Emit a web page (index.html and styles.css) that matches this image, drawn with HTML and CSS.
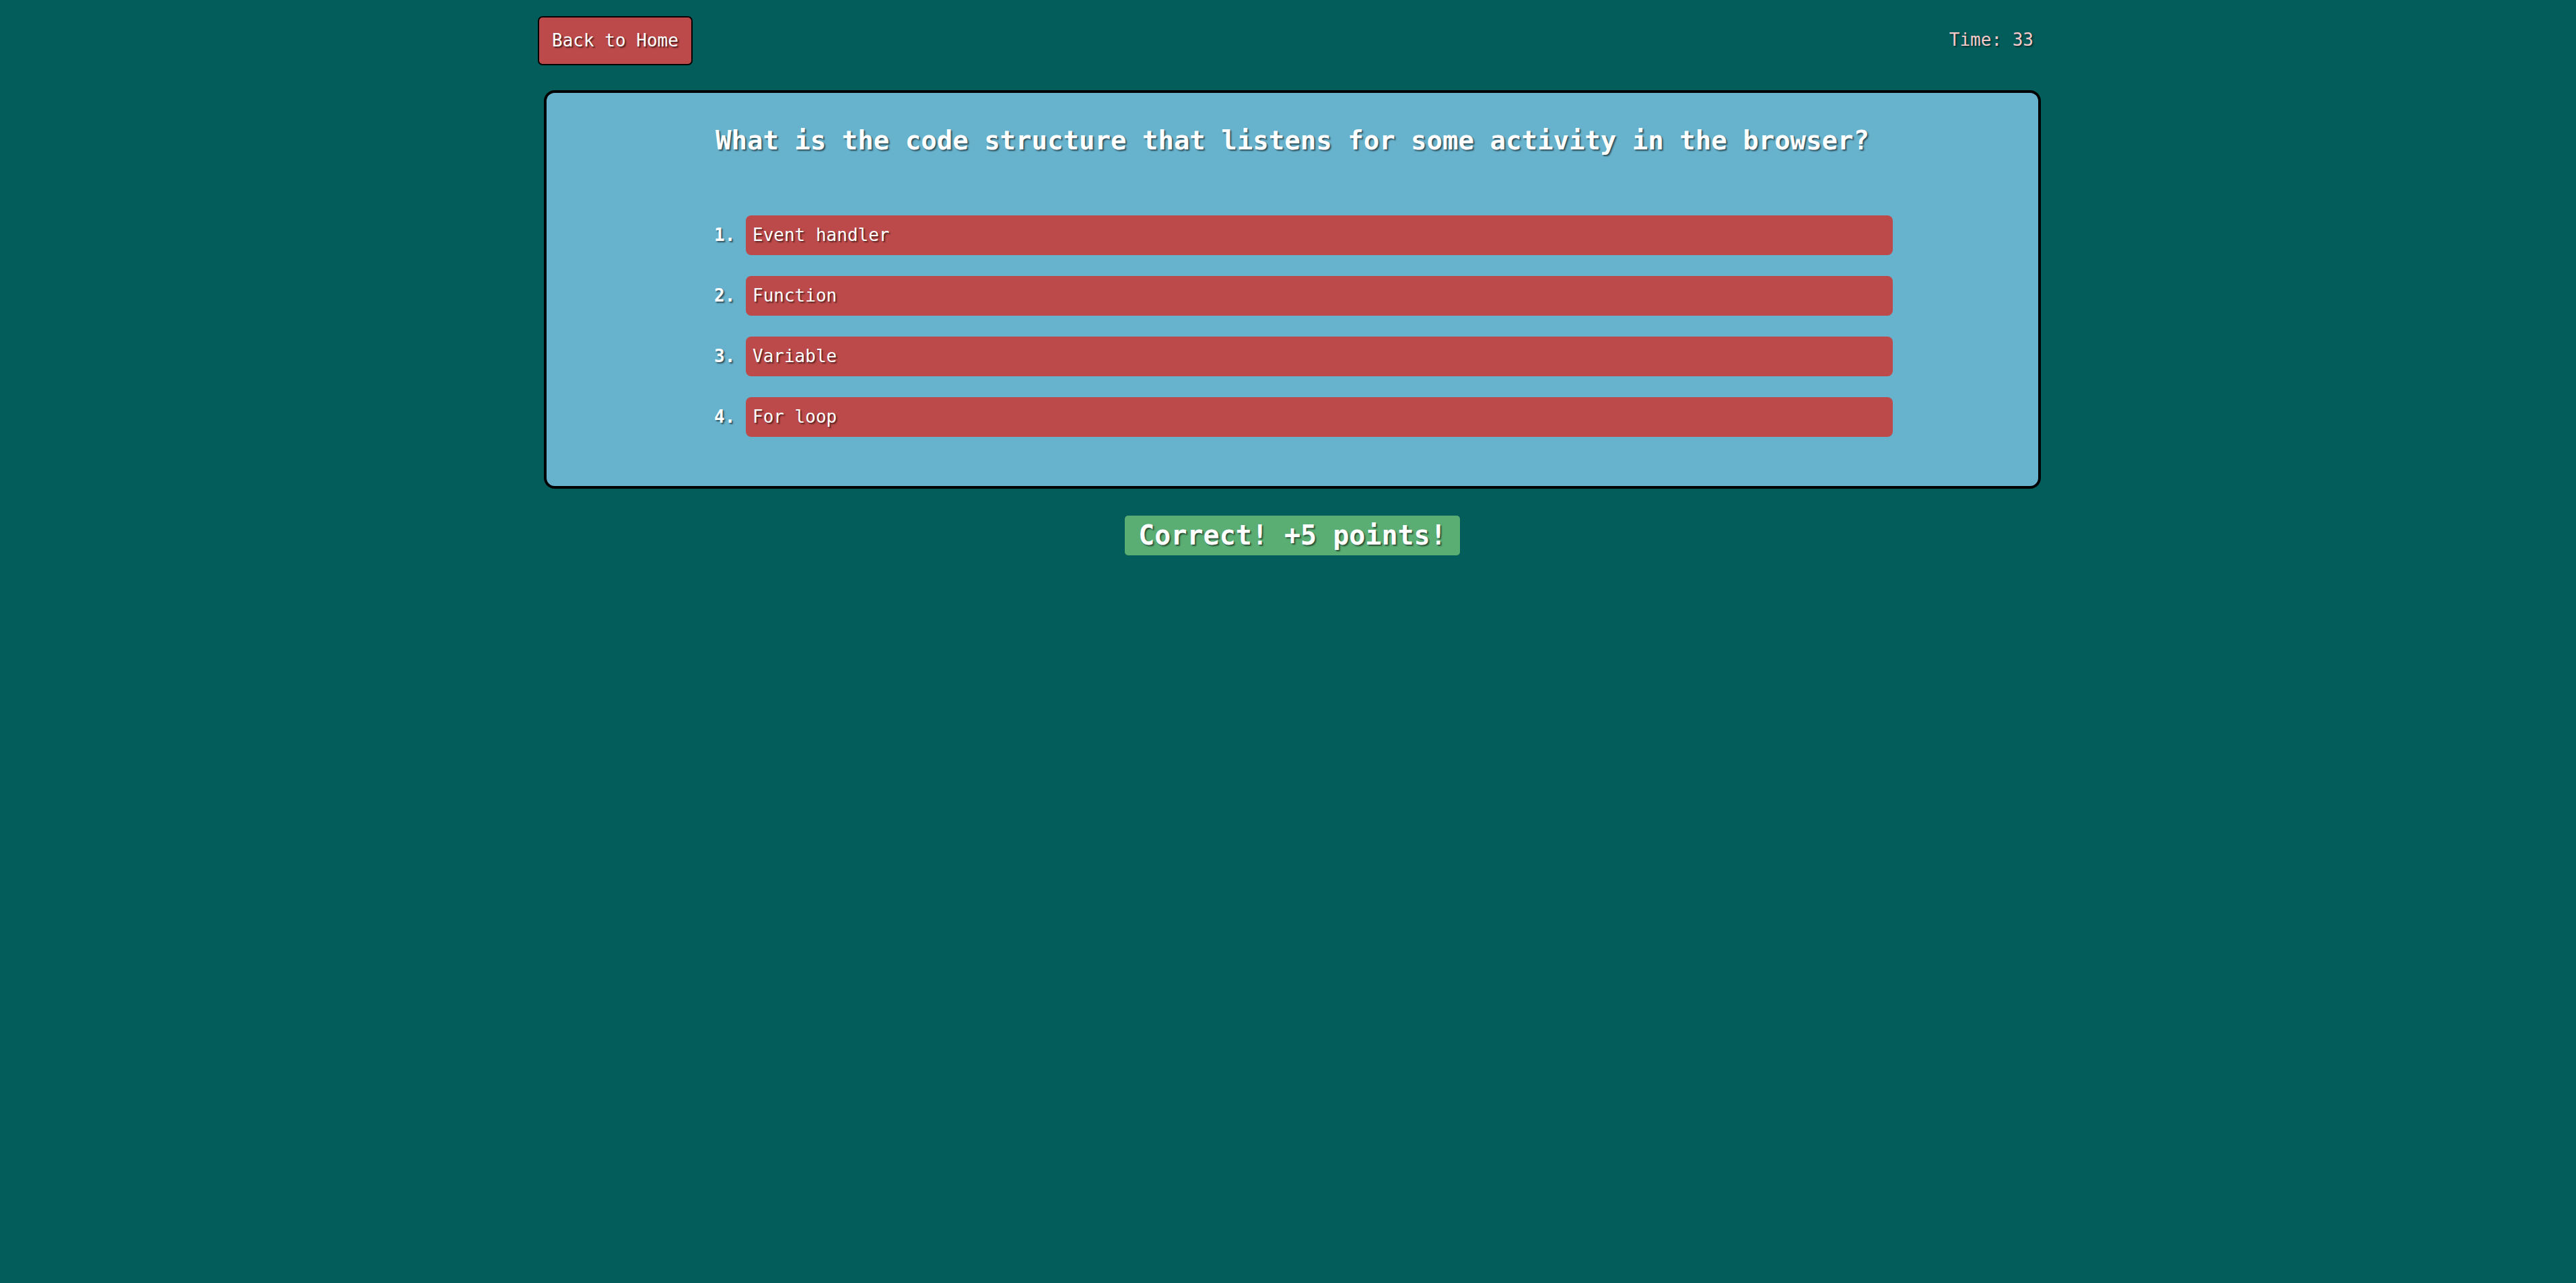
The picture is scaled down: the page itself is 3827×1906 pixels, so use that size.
FILE: index.html
```html
<!DOCTYPE html>
<html lang="en">
<head>
<meta charset="utf-8">
<title>Quiz</title>
<link rel="stylesheet" href="styles.css">
</head>
<body>
<div class="container">
  <header class="top">
    <button class="home-btn">Back to Home</button>
    <span class="timer">Time: 33</span>
  </header>
  <section class="card">
    <h2 class="question">What is the code structure that listens for some activity in the browser?</h2>
    <ol class="choices">
      <li><button class="choice">Event handler</button></li>
      <li><button class="choice">Function</button></li>
      <li><button class="choice">Variable</button></li>
      <li><button class="choice">For loop</button></li>
    </ol>
  </section>
  <div class="feedback-row">
    <span class="feedback">Correct! +5 points!</span>
  </div>
</div>
</body>
</html>
```
FILE: styles.css
```css
html, body {
  margin: 0;
  padding: 0;
}
body {
  background: #025d5b;
  font-family: "DejaVu Sans Mono", "Liberation Mono", monospace;
  color: #ffffff;
  min-height: 1906px;
}
.container {
  width: 2229px;
  margin: 0 auto;
}
.top {
  display: flex;
  justify-content: space-between;
  align-items: center;
  padding-top: 24px;
}
.home-btn {
  font-family: inherit;
  font-size: 26px;
  line-height: 31px;
  color: #ffffff;
  background: #bd4a4a;
  border: 2px solid #000000;
  border-radius: 7px;
  padding: 19px 19px;
  text-shadow: 2px 2px 2px rgba(0, 0, 0, 0.6);
  cursor: pointer;
}
.timer {
  font-size: 26px;
  color: #f8c9c9;
  margin-right: 7px;
  margin-top: -4px;
  text-shadow: 2px 2px 2px rgba(0, 0, 0, 0.45);
}
.card {
  box-sizing: border-box;
  width: 2224px;
  margin: 37px 0 0 9px;
  background: #67b2cc;
  border: 4px solid #000000;
  border-radius: 16px;
  padding: 48px 0 73px;
}
.question {
  margin: 0;
  text-align: center;
  font-size: 39px;
  font-weight: bold;
  line-height: 45px;
  text-shadow: 2px 2px 2px rgba(0, 0, 0, 0.55);
}
.choices {
  margin: 89px 216px 0 296px;
  padding: 0;
  font-size: 26px;
}
.choices li {
  margin-bottom: 31px;
  text-shadow: 2px 2px 2px rgba(0, 0, 0, 0.55);
}
.choices li:last-child {
  margin-bottom: 0;
}
.choices li::marker {
  font-weight: bold;
  color: #ffffff;
}
.choice {
  display: block;
  width: 100%;
  box-sizing: border-box;
  text-align: left;
  font-family: inherit;
  font-size: 26px;
  line-height: 31px;
  color: #ffffff;
  background: #bd4a4a;
  border: none;
  border-radius: 8px;
  padding: 14px 10px;
  text-shadow: 2px 2px 2px rgba(0, 0, 0, 0.55);
  cursor: pointer;
}
.feedback-row {
  width: 2224px;
  margin: 40px 0 0 9px;
  text-align: center;
}
.feedback {
  display: inline-block;
  background: #5aae74;
  border-radius: 5px;
  padding: 6px 20px 7px;
  font-size: 40px;
  line-height: 46px;
  font-weight: bold;
  text-shadow: 2px 2px 2px rgba(0, 0, 0, 0.55);
}
```
